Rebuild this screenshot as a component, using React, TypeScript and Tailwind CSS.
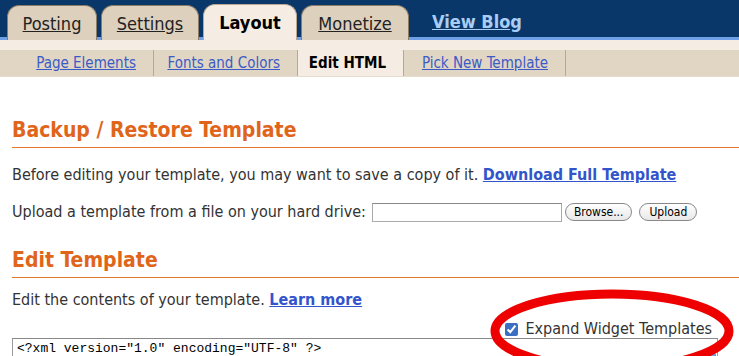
import { useState } from "react";

const tabs = [
  { label: "Posting", w: "w-[90px]" },
  { label: "Settings", w: "w-[98px]" },
  { label: "Layout", w: "w-[94px]", active: true },
  { label: "Monetize", w: "w-[108px]" },
];

const subTabs = [
  { label: "Page Elements", w: "w-[154px]" },
  { label: "Fonts and Colors", w: "w-[144px]" },
  { label: "Edit HTML", w: "w-[106px]", active: true },
  { label: "Pick New Template", w: "w-[162px]" },
];

const font = "font-['DejaVu_Sans_Condensed','Liberation_Sans',sans-serif]";

export default function App() {
  const [expand, setExpand] = useState(true);

  return (
    <div className={`relative w-[739px] h-[356px] overflow-hidden bg-white ${font}`}>
      {/* Main tabs */}
      <div className="flex items-end h-[40px] pl-[7px] gap-[4px] bg-[linear-gradient(to_bottom,#0a3769_37px,#6f9fe5_37px)]">
        {tabs.map((t) => (
          <div
            key={t.label}
            className={`${t.w} flex items-center justify-center rounded-t-[12px] border border-b-0 ${
              t.active
                ? "h-[36px] bg-[#f5ede3] border-[#b9a88f] text-black font-bold"
                : "h-[35px] bg-[#ddd0bc] border-[#8c7c66] text-[#222] underline"
            } text-[18px]`}
          >
            {t.label}
          </div>
        ))}
        <div className="h-[37px] flex items-center pl-[19px] text-[18px] font-bold text-[#a9cdf6] underline">
          View Blog
        </div>
      </div>

      {/* Cream strip */}
      <div className="h-[10px] bg-[#f5ede3]" />

      {/* Sub tabs */}
      <div className="flex h-[27px] bg-[#e1d5c3] border-b border-[#e6dccd]">
        {subTabs.map((s) => (
          <div
            key={s.label}
            className={`${s.w} flex items-center justify-end pr-[17px] border-r border-[#b8a890] text-[15px] ${
              s.active ? "bg-[#f5ede3] font-bold text-black" : "text-[#3a5bc7] underline"
            }`}
          >
            {s.label}
          </div>
        ))}
      </div>

      <div className="pl-[12px] text-[16px] text-[#333]">
        {/* Backup / Restore */}
        <h2 className="mt-[38px] pb-[2px] border-b border-[#e2782c] text-[21px] leading-[30px] font-bold text-[#e0651a]">
          Backup / Restore Template
        </h2>
        <p className="mt-[17px] leading-[20px]">
          Before editing your template, you may want to save a copy of it.{" "}
          <a className="font-bold text-[#3355cc] underline">Download Full Template</a>
        </p>
        <div className="mt-[17px] flex items-center h-[20px]">
          <span>Upload a template from a file on your hard drive:</span>
          <div className="ml-[6px] w-[190px] h-[19px] border border-[#aaa] border-t-[#888] bg-white" />
          <button className="ml-[3px] h-[18px] px-[8px] rounded-full border border-[#888] bg-[linear-gradient(#fff,#e8e8e8)] text-[12px] leading-[16px] text-black">
            Browse...
          </button>
          <button className="ml-[7px] h-[18px] px-[9px] rounded-full border border-[#888] bg-[linear-gradient(#fff,#e8e8e8)] text-[12px] leading-[16px] text-black">
            Upload
          </button>
        </div>

        {/* Edit Template */}
        <h2 className="mt-[23px] pb-[2px] border-b border-[#e2782c] text-[21px] leading-[30px] font-bold text-[#e0651a]">
          Edit Template
        </h2>
        <p className="mt-[12px] leading-[20px]">
          Edit the contents of your template.{" "}
          <a className="font-bold text-[#3355cc] underline">Learn more</a>
        </p>
        <div className="mt-[10px] h-[18px] flex items-center justify-end pr-[27px]">
          <input
            type="checkbox"
            checked={expand}
            onChange={(e) => setExpand(e.target.checked)}
            className="w-[13px] h-[13px] mr-[7px] accent-[#3a6fc4]"
          />
          <span>Expand Widget Templates</span>
        </div>
        <div className="mr-[21px] h-[40px] border border-[#999] border-t-[#888] relative">
          <div className="pl-[4px] pt-[2px] font-['Liberation_Mono',monospace] text-[13px] leading-[15px] text-black">
            {'<?xml version="1.0" encoding="UTF-8" ?>'}
          </div>
          <div className="absolute right-[1px] top-[10px] w-[13px] h-[16px] rounded-full bg-[radial-gradient(circle_at_40%_35%,#9cc6ff,#2a6fd6)]" />
        </div>
      </div>

      {/* Red annotation ellipse */}
      <svg className="absolute left-0 top-0 pointer-events-none" width="739" height="356">
        <ellipse cx="612" cy="331" rx="117" ry="37" fill="none" stroke="#ee0000" strokeWidth="9" />
      </svg>
    </div>
  );
}
